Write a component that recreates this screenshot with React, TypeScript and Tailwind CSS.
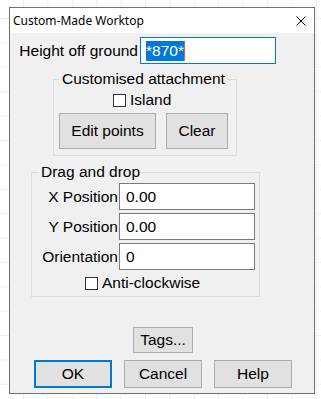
import React from "react";

function Checkbox({ label }: { label: string }) {
    return (
        <div className="flex items-center h-[18px]">
            <span className="w-[13px] h-[13px] border border-[#333333] bg-white" />
            <span className="ml-[4px] leading-[18px]">{label}</span>
        </div>
    );
}

function Button({ label, className }: { label: string; className: string }) {
    return (
        <button
            type="button"
            className={
                "flex items-center justify-center bg-[#e1e1e1] leading-[18px] text-black " + className
            }
        >
            {label}
        </button>
    );
}

export default function App() {
    const positions = [
        { label: "X Position", value: "0.00" },
        { label: "Y Position", value: "0.00" },
        { label: "Orientation", value: "0" },
    ];

    return (
        <div className="w-[321px] h-[399px] overflow-hidden bg-white bg-[linear-gradient(to_right,#ececec_1px,transparent_1px),linear-gradient(to_bottom,#ececec_1px,transparent_1px)] bg-[size:24.4px_24.4px] bg-[position:23px_18px] pt-[7px] pl-[9px] font-['Liberation_Sans',Arial,sans-serif] text-[15.5px] text-black">
            <div className="w-[306px] h-[387px] border border-[#707070] flex flex-col">
                {/* Title bar */}
                <div className="h-[25px] bg-white flex items-center justify-between pl-[3px] pr-[8px]">
                    <span className="font-['Noto_Sans',sans-serif] text-[12px] leading-[16px]">
                        Custom-Made Worktop
                    </span>
                    <svg width="10" height="10" viewBox="0 0 10 10">
                        <path d="M0.5 0.5 L9.5 9.5 M9.5 0.5 L0.5 9.5" stroke="#000" strokeWidth="1" />
                    </svg>
                </div>

                {/* Body */}
                <div className="flex-1 bg-[#f0f0f0] flex flex-col">
                    <div className="mt-[4px] flex items-center h-[27px]">
                        <span className="w-[128px] text-right leading-[18px]">Height off ground</span>
                        <div className="ml-[2px] w-[136px] h-[27px] border border-[#0078d7] bg-white flex items-center pl-[5px]">
                            <span className="bg-[#0078d7] text-white leading-[20px]">*870*</span>
                            <span className="w-[1px] h-[20px] bg-[#f7630c]" />
                        </div>
                    </div>

                    {/* Customised attachment */}
                    <fieldset className="ml-[43px] mt-[6px] w-[184px] border border-[#dcdcdc]">
                        <legend className="ml-[6px] px-[2px] leading-[18px]">Customised attachment</legend>
                        <div className="pt-[3px] ml-[59px]">
                            <Checkbox label="Island" />
                        </div>
                        <div className="mt-[4px] ml-[5px] pb-[6px] flex gap-[10px]">
                            <Button label="Edit points" className="w-[97px] h-[36px] border border-[#adadad]" />
                            <Button label="Clear" className="w-[62px] h-[36px] border border-[#adadad]" />
                        </div>
                    </fieldset>

                    {/* Drag and drop */}
                    <fieldset className="ml-[21px] mt-[7px] w-[229px] border border-[#dcdcdc]">
                        <legend className="ml-[7px] px-[2px] leading-[18px]">Drag and drop</legend>
                        <div className="pt-[2px] flex flex-col gap-[3px]">
                            {positions.map((row) => (
                                <div key={row.label} className="flex items-center h-[27px]">
                                    <span className="w-[86px] text-right leading-[18px]">{row.label}</span>
                                    <div className="ml-[1px] w-[136px] h-[27px] border border-[#7a7a7a] bg-white flex items-center pl-[6px] leading-[18px]">
                                        {row.value}
                                    </div>
                                </div>
                            ))}
                        </div>
                        <div className="mt-[4px] pb-[4px] ml-[53px]">
                            <Checkbox label="Anti-clockwise" />
                        </div>
                    </fieldset>

                    <div className="mt-[30px] ml-[123px]">
                        <Button label="Tags..." className="w-[60px] h-[26px] border border-[#adadad]" />
                    </div>

                    <div className="mt-[7px] ml-[24px] flex gap-[12px]">
                        <Button label="OK" className="w-[78px] h-[28px] border-2 border-[#0078d7]" />
                        <Button label="Cancel" className="w-[78px] h-[28px] border border-[#adadad]" />
                        <Button label="Help" className="w-[78px] h-[28px] border border-[#adadad]" />
                    </div>
                </div>
            </div>
        </div>
    );
}
